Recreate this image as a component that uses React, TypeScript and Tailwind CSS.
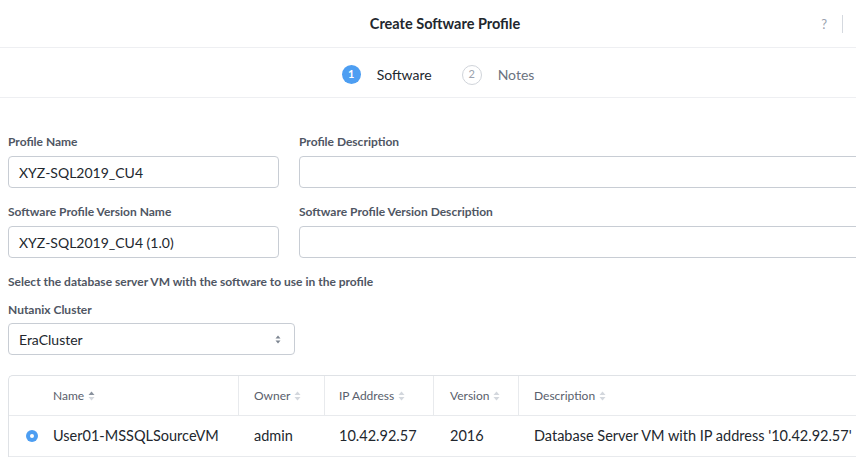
import React from 'react'

const font = { fontFamily: 'Lato, "Open Sans", sans-serif' }

function SortIcon({ active = false }: { active?: boolean }) {
  return (
    <svg width="7" height="10" viewBox="0 0 7 10" className="ml-1 inline-block">
      <path d="M3.5 0.5 L6.5 4 L0.5 4 Z" fill={active ? '#8a929e' : '#d3d7dd'} />
      <path d="M3.5 9.5 L6.5 6 L0.5 6 Z" fill="#d3d7dd" />
    </svg>
  )
}

function Field({ label, value, className }: { label: string; value?: string; className: string }) {
  return (
    <div className={className}>
      <div className="text-[12px] font-bold text-[#4f5663] leading-[14px] h-[14px]">{label}</div>
      <div className="mt-[7px] h-[32px] rounded-[4px] border border-[#c8cdd4] bg-white px-[10px] flex items-center text-[14px] text-[#22272e]">
        {value}
      </div>
    </div>
  )
}

export default function App() {
  return (
    <div className="w-[856px] h-[459px] overflow-hidden bg-white" style={font}>
      {/* Header */}
      <div className="h-[48px] border-b border-[#eeeff2] flex items-center relative">
        <div className="flex-1 text-center text-[14.5px] font-bold text-[#22272e] pl-[34px]">Create Software Profile</div>
        <div className="absolute right-[29px] top-[15px] text-[13px] text-[#9aa2ae]">?</div>
        <div className="absolute left-[842px] top-[15px] w-px h-[18px] bg-[#d5d9df]" />
      </div>

      {/* Stepper */}
      <div className="h-[50px] border-b border-[#eeeff2] flex items-center justify-center pl-[20px] pt-[4px]">
        <div className="flex items-center">
          <div className="w-[19px] h-[19px] rounded-full bg-[#4d9ef2] text-white text-[11px] font-bold flex items-center justify-center">1</div>
          <div className="ml-[16px] text-[14px] text-[#22272e]">Software</div>
          <div className="ml-[30px] w-[20px] h-[20px] rounded-full border border-[#d0d4da] text-[#9aa2ae] text-[11px] flex items-center justify-center">2</div>
          <div className="ml-[16px] text-[14px] text-[#6b7380]">Notes</div>
        </div>
      </div>

      {/* Form */}
      <div className="pl-[8px] pt-[37px] w-[1100px]">
        <div className="flex gap-[20px]">
          <Field label="Profile Name" value="XYZ-SQL2019_CU4" className="w-[271px]" />
          <Field label="Profile Description" className="w-[700px]" />
        </div>
        <div className="flex gap-[20px] mt-[17px]">
          <Field label="Software Profile Version Name" value="XYZ-SQL2019_CU4 (1.0)" className="w-[271px]" />
          <Field label="Software Profile Version Description" className="w-[700px]" />
        </div>

        <div className="mt-[17px] text-[12px] font-bold text-[#4f5663] leading-[14px]">
          Select the database server VM with the software to use in the profile
        </div>

        <div className="mt-[14px] text-[12px] font-bold text-[#4f5663] leading-[14px]">Nutanix Cluster</div>
        <div className="mt-[6px] w-[287px] h-[32px] rounded-[4px] border border-[#c8cdd4] px-[10px] flex items-center justify-between text-[14px] text-[#22272e]">
          <span>EraCluster</span>
          <svg width="6" height="9" viewBox="0 0 6 9" className="mr-[3px]">
            <path d="M3 0.5 L5.5 3.5 L0.5 3.5 Z" fill="#7d8591" />
            <path d="M3 8.5 L5.5 5.5 L0.5 5.5 Z" fill="#7d8591" />
          </svg>
        </div>

        {/* Table */}
        <div className="mt-[20px] w-[1000px] border-l border-t border-[#dfe2e6] rounded-tl-[5px]">
          <div className="grid grid-cols-[29px_201px_86px_109px_85px_1fr] h-[40px] border-b border-[#e8eaed] text-[12px] text-[#59606c]">
            <div />
            <div className="flex items-center pl-[15px] border-r border-[#e8eaed]">Name<SortIcon active /></div>
            <div className="flex items-center pl-[15px] border-r border-[#e8eaed]">Owner<SortIcon /></div>
            <div className="flex items-center pl-[14px] border-r border-[#e8eaed]">IP Address<SortIcon /></div>
            <div className="flex items-center pl-[16px] border-r border-[#e8eaed]">Version<SortIcon /></div>
            <div className="flex items-center pl-[15px]">Description<SortIcon /></div>
          </div>
          <div className="grid grid-cols-[29px_201px_86px_109px_85px_1fr] h-[41px] border-b border-[#e8eaed] text-[14.5px] text-[#22272e]">
            <div className="flex items-center pl-[17px]">
              <div className="w-[12px] h-[12px] rounded-full bg-[#4d9ef2] flex items-center justify-center">
                <div className="w-[4px] h-[4px] rounded-full bg-white" />
              </div>
            </div>
            <div className="flex items-center pl-[15px]">User01-MSSQLSourceVM</div>
            <div className="flex items-center pl-[15px]">admin</div>
            <div className="flex items-center pl-[14px]">10.42.92.57</div>
            <div className="flex items-center pl-[16px]">2016</div>
            <div className="flex items-center pl-[15px]">Database Server VM with IP address '10.42.92.57'</div>
          </div>
        </div>
      </div>
    </div>
  )
}
